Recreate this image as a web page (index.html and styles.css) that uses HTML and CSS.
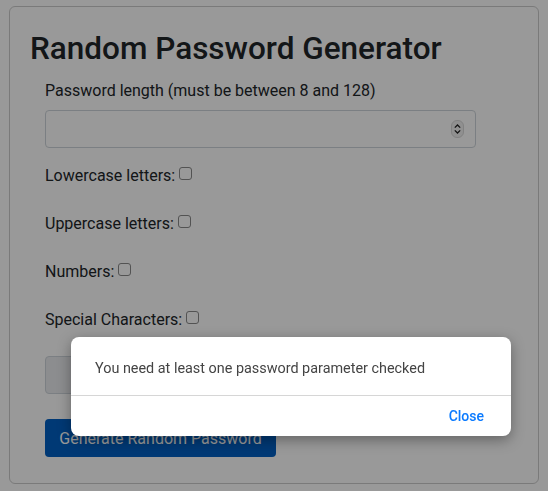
FILE: index.html
```html
<!DOCTYPE html>
<html>
<head>
<meta charset="utf-8">
<link rel="stylesheet" href="styles.css">
</head>
<body>
<div class="card">
  <h1 class="title">Random Password Generator</h1>
  <form class="form">
    <label class="field-label">Password length (must be between 8 and 128)</label>
    <div class="number-input">
      <span class="spinner">
        <svg width="9" height="12" viewBox="0 0 9 12"><path d="M1.8 4.6 L4.5 2 L7.2 4.6 M1.8 7.4 L4.5 10 L7.2 7.4" fill="none" stroke="#222" stroke-width="1.3"/></svg>
      </span>
    </div>
    <div class="check-row check-first">Lowercase letters: <span class="checkbox"></span></div>
    <div class="check-row">Uppercase letters: <span class="checkbox"></span></div>
    <div class="check-row">Numbers: <span class="checkbox"></span></div>
    <div class="check-row">Special Characters: <span class="checkbox"></span></div>
    <div class="output-box"></div>
    <button type="button" class="btn-primary">Generate Random Password</button>
  </form>
</div>
<div class="overlay"></div>
<div class="dialog">
  <div class="dialog-body">You need at least one password parameter checked</div>
  <div class="dialog-footer"><span class="dialog-close">Close</span></div>
</div>
</body>
</html>
```
FILE: styles.css
```css
* { box-sizing: border-box; }
html, body { margin: 0; padding: 0; }
body {
  background: #ffffff;
  font-family: Roboto, "Liberation Sans", sans-serif;
  color: #212529;
  width: 548px;
  height: 491px;
  overflow: hidden;
  padding: 6px 9px 0 9px;
}
.card {
  border: 1px solid rgba(0,0,0,0.2);
  border-radius: 6px;
  height: 478px;
  padding: 23px 20px 0 20px;
}
.title {
  margin: 0;
  font-size: 31.5px;
  font-weight: 500;
  line-height: 38px;
}
.form {
  padding: 0 0 0 15px;
  margin-top: 11px;
}
.field-label {
  display: block;
  font-size: 16px;
  line-height: 24px;
  margin-bottom: 7px;
}
.number-input {
  width: 431px;
  height: 38px;
  border: 1px solid #ced4da;
  border-radius: 4px;
  display: flex;
  align-items: center;
  justify-content: flex-end;
  padding-right: 11px;
}
.spinner {
  width: 13px;
  height: 18px;
  border-radius: 6px;
  background: #f0f0f0;
  border: 1px solid #d8d8d8;
  display: flex;
  align-items: center;
  justify-content: center;
}
.check-row {
  font-size: 16px;
  line-height: 24px;
  height: 24px;
  margin-top: 24px;
  display: flex;
  align-items: center;
  gap: 4px;
}
.check-first { margin-top: 16px; }
.checkbox {
  display: inline-block;
  width: 13px;
  height: 13px;
  border: 1px solid #8a8a8a;
  border-radius: 3px;
  background: #fff;
  margin-top: -5px;
}
.output-box {
  width: 431px;
  height: 38px;
  margin-top: 24px;
  background: #e9ecef;
  border: 1px solid #ced4da;
  border-radius: 4px;
}
.btn-primary {
  display: block;
  margin-top: 25px;
  width: 231px;
  height: 38px;
  background: #005fc4;
  border: none;
  border-radius: 4px;
  color: #fff;
  font-family: Roboto, sans-serif;
  font-size: 16px;
}
.overlay {
  position: fixed;
  inset: 0;
  background: rgba(0,0,0,0.4);
}
.dialog {
  position: absolute;
  left: 71px;
  top: 337px;
  width: 440px;
  height: 99px;
  background: #fff;
  border-radius: 8px;
  box-shadow: 0 4px 14px rgba(0,0,0,0.35);
  display: flex;
  flex-direction: column;
}
.dialog-body {
  height: 59px;
  padding: 23px 24px 0 24px;
  font-size: 14.4px;
  color: #444;
  border-bottom: 1px solid #d6d6d6;
}
.dialog-footer {
  flex: 1;
  display: flex;
  align-items: center;
  justify-content: flex-end;
  padding-right: 27px;
}
.dialog-close {
  color: #0a7aff;
  font-size: 14px;
  font-weight: 500;
}
```
